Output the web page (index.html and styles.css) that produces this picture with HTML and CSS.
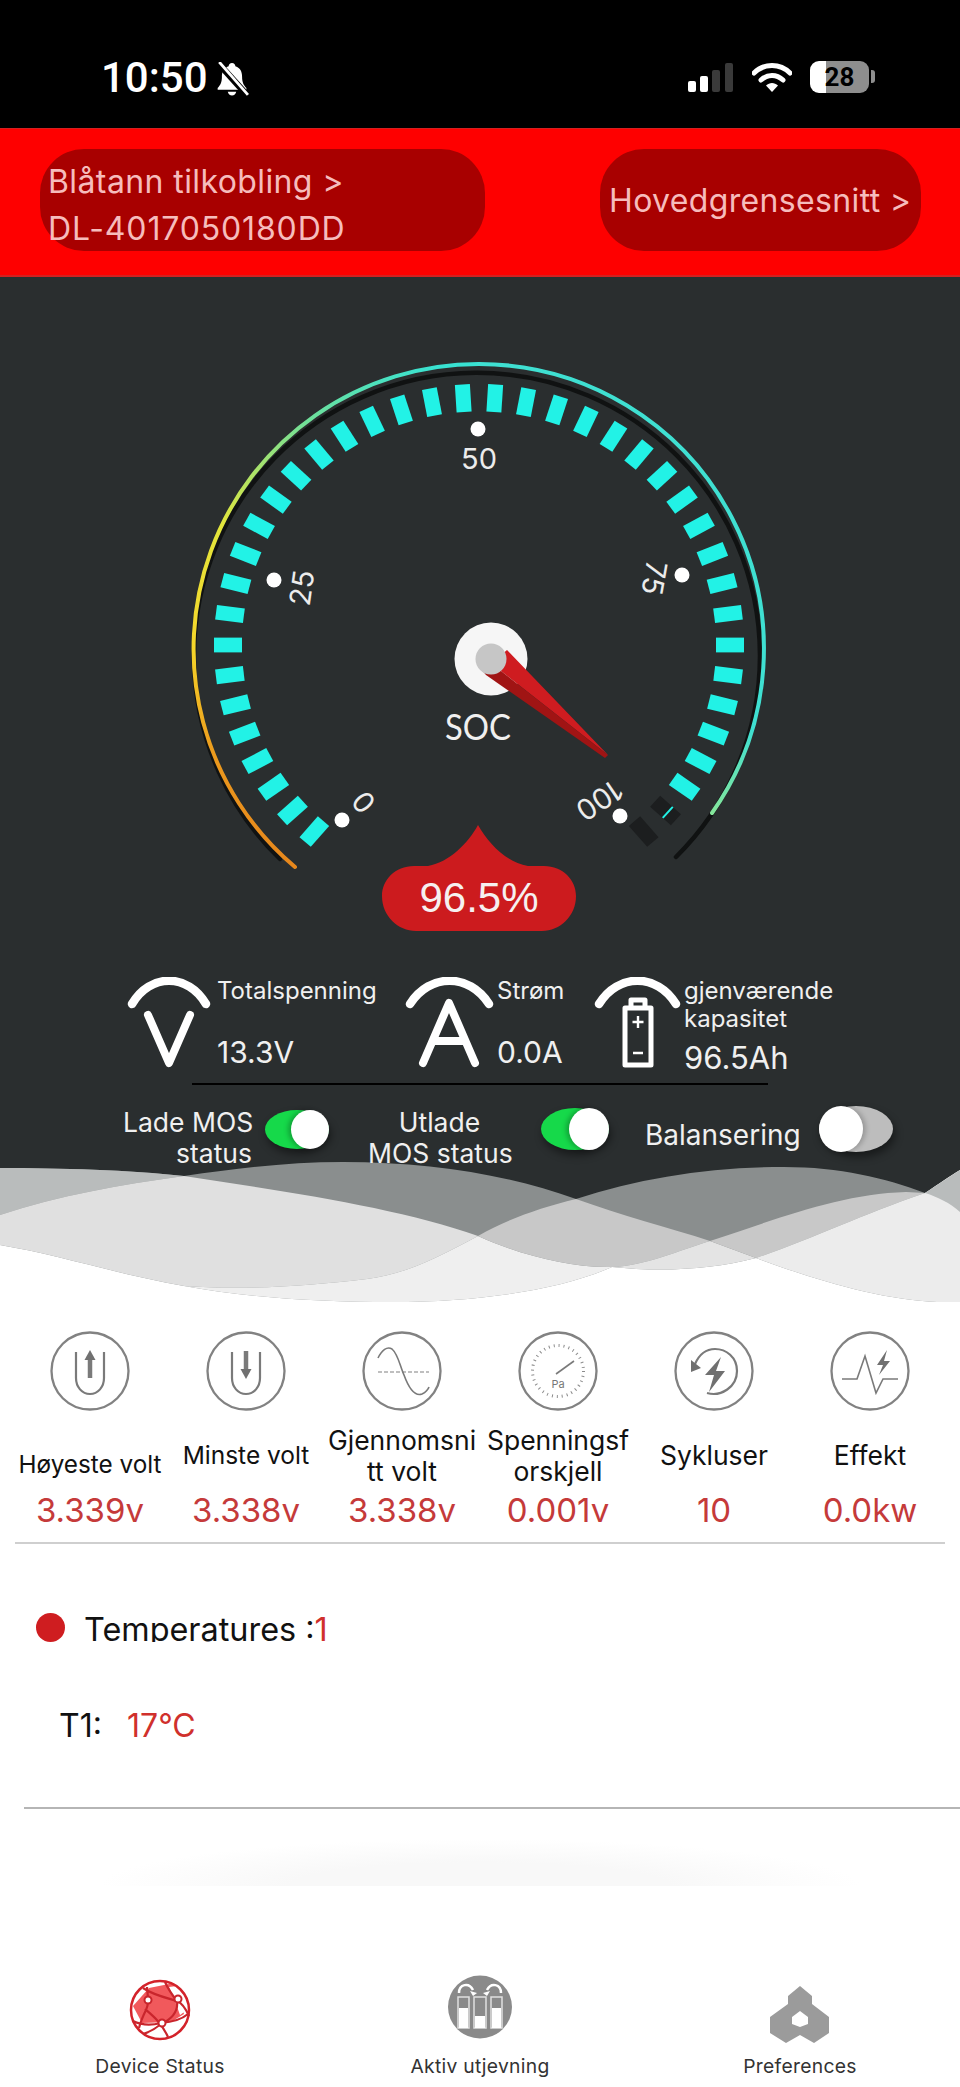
FILE: index.html
```html
<!DOCTYPE html>
<html lang="no">
<head>
<meta charset="utf-8">
<title>Device Status</title>
<link rel="stylesheet" href="styles.css">
</head>
<body>
<div class="page">
  <header class="statusbar">
    <div class="sb-left">
      <span class="time">10:50</span>
      <svg class="bell" viewBox="0 0 32 32" width="34" height="34">
        <path d="M16 1c-2 0-3 1.500-3.200 3C8 5.500 6.500 9.500 6.500 14c0 5-1.500 7.500-4 10.500V26h27v-1.500c-2.500-3-4-5.500-4-10.500 0-4.500-1.500-8.500-6.300-10C19 2.500 18 1 16 1z" fill="#fff"/>
        <path d="M12 28h8c-.5 2-2 3.500-4 3.500S12.500 30 12 28z" fill="#fff"/>
        <path d="M3 1l27 30" stroke="#000" stroke-width="6"/>
        <path d="M4 0l27 31" stroke="#fff" stroke-width="2.600"/>
      </svg>
    </div>
    <div class="sb-right">
      <svg class="signal" viewBox="0 0 46 29" width="46" height="29">
        <rect x="0" y="18" width="8" height="11" rx="2" fill="#fff"/>
        <rect x="12" y="13" width="8" height="16" rx="2" fill="#fff"/>
        <rect x="24" y="7" width="8" height="22" rx="2" fill="#3a3a3a"/>
        <rect x="37" y="0" width="8" height="29" rx="2" fill="#3a3a3a"/>
      </svg>
      <svg class="wifi" viewBox="0 0 40 29" width="40" height="29">
        <path d="M2 10C12 0 28 0 38 10" fill="none" stroke="#fff" stroke-width="5" stroke-linecap="round"/>
        <path d="M9 17c6.500-6 15.500-6 22 0" fill="none" stroke="#fff" stroke-width="5" stroke-linecap="round"/>
        <path d="M14 22.500c3.500-3.500 8.500-3.500 12 0L20 29z" fill="#fff"/>
      </svg>
      <div class="battery"><span>28</span></div>
      <div class="battery-nub"></div>
    </div>
  </header>

  <nav class="topbar">
    <div class="pill pill-left">
      <div class="pill-line-a">Blåtann tilkobling &gt;</div>
      <div class="pill-line-b">DL-4017050180DD</div>
    </div>
    <div class="pill pill-right">Hovedgrensesnitt &gt;</div>
  </nav>

  <section class="hero">
    <svg class="gauge" viewBox="0 277 960 680" width="960" height="680">
      <defs>
        <linearGradient id="arcLeft" gradientUnits="userSpaceOnUse" x1="240" y1="880" x2="420" y2="360">
          <stop offset="0" stop-color="#e5801c"/>
          <stop offset=".2" stop-color="#eb9a1d"/>
          <stop offset=".37" stop-color="#f6d62a"/>
          <stop offset=".6" stop-color="#e2e63c"/>
          <stop offset=".83" stop-color="#6fe09a"/>
          <stop offset="1" stop-color="#38e2d2"/>
        </linearGradient>
        <linearGradient id="arcRight" gradientUnits="userSpaceOnUse" x1="700" y1="730" x2="700" y2="815">
          <stop offset="0" stop-color="#3fe0d2"/>
          <stop offset="1" stop-color="#86e69a"/>
        </linearGradient>
      </defs>
      <path class="arc-track" d="M280 859A283 283 0 1 1 676 857"/>
      <path class="arc-color" stroke="url(#arcLeft)" d="M295 867A285 285 0 0 1 479 364"/>
      <path class="arc-color" stroke="url(#arcRight)" d="M479 364A285 285 0 0 1 712 813"/>
      <g class="ticks" transform="translate(479 645) scale(1 .985)">
        <rect x="-7.500" y="-265" width="15" height="28" transform="rotate(-139)"/>
        <rect x="-7.500" y="-265" width="15" height="28" transform="rotate(-132)"/>
        <rect x="-7.500" y="-265" width="15" height="28" transform="rotate(-125)"/>
        <rect x="-7.500" y="-265" width="15" height="28" transform="rotate(-118)"/>
        <rect x="-7.500" y="-265" width="15" height="28" transform="rotate(-111)"/>
        <rect x="-7.500" y="-265" width="15" height="28" transform="rotate(-104)"/>
        <rect x="-7.500" y="-265" width="15" height="28" transform="rotate(-97)"/>
        <rect x="-7.500" y="-265" width="15" height="28" transform="rotate(-90)"/>
        <rect x="-7.500" y="-265" width="15" height="28" transform="rotate(-82.800)"/>
        <rect x="-7.500" y="-265" width="15" height="28" transform="rotate(-75.600)"/>
        <rect x="-7.500" y="-265" width="15" height="28" transform="rotate(-68.400)"/>
        <rect x="-7.500" y="-265" width="15" height="28" transform="rotate(-61.200)"/>
        <rect x="-7.500" y="-265" width="15" height="28" transform="rotate(-54)"/>
        <rect x="-7.500" y="-265" width="15" height="28" transform="rotate(-46.800)"/>
        <rect x="-7.500" y="-265" width="15" height="28" transform="rotate(-39.600)"/>
        <rect x="-7.500" y="-265" width="15" height="28" transform="rotate(-32.400)"/>
        <rect x="-7.500" y="-265" width="15" height="28" transform="rotate(-25.200)"/>
        <rect x="-7.500" y="-265" width="15" height="28" transform="rotate(-18)"/>
        <rect x="-7.500" y="-265" width="15" height="28" transform="rotate(-10.800)"/>
        <rect x="-7.500" y="-265" width="15" height="28" transform="rotate(-3.600)"/>
        <rect x="-7.500" y="-265" width="15" height="28" transform="rotate(3.600)"/>
        <rect x="-7.500" y="-265" width="15" height="28" transform="rotate(10.800)"/>
        <rect x="-7.500" y="-265" width="15" height="28" transform="rotate(18)"/>
        <rect x="-7.500" y="-265" width="15" height="28" transform="rotate(25.200)"/>
        <rect x="-7.500" y="-265" width="15" height="28" transform="rotate(32.400)"/>
        <rect x="-7.500" y="-265" width="15" height="28" transform="rotate(39.600)"/>
        <rect x="-7.500" y="-265" width="15" height="28" transform="rotate(46.800)"/>
        <rect x="-7.500" y="-265" width="15" height="28" transform="rotate(54)"/>
        <rect x="-7.500" y="-265" width="15" height="28" transform="rotate(61.200)"/>
        <rect x="-7.500" y="-265" width="15" height="28" transform="rotate(68.400)"/>
        <rect x="-7.500" y="-265" width="15" height="28" transform="rotate(75.600)"/>
        <rect x="-7.500" y="-265" width="15" height="28" transform="rotate(82.800)"/>
        <rect x="-7.500" y="-265" width="15" height="28" transform="rotate(90)"/>
        <rect x="-7.500" y="-265" width="15" height="28" transform="rotate(97)"/>
        <rect x="-7.500" y="-265" width="15" height="28" transform="rotate(104)"/>
        <rect x="-7.500" y="-265" width="15" height="28" transform="rotate(111)"/>
        <rect x="-7.500" y="-265" width="15" height="28" transform="rotate(118)"/>
        <rect x="-7.500" y="-265" width="15" height="28" transform="rotate(125)"/>
        <rect class="tick-off" x="-7.500" y="-265" width="15" height="28" transform="rotate(132)"/>
        <rect x="-7.500" y="-255" width="15" height="2" transform="rotate(132)"/>
        <rect class="tick-off" x="-7.500" y="-265" width="15" height="28" transform="rotate(139)"/>
      </g>
      <g class="dots">
        <circle cx="342" cy="820" r="7.500"/>
        <circle cx="274" cy="580" r="7.500"/>
        <circle cx="478" cy="429" r="7.500"/>
        <circle cx="682" cy="575" r="7.500"/>
        <circle cx="620" cy="816" r="7.500"/>
      </g>
      <g class="scale">
        <text transform="translate(364 802) rotate(-130)" y="10">0</text>
        <text transform="translate(302 588) rotate(-82)" y="10">25</text>
        <text x="479" y="469">50</text>
        <text transform="translate(654 578) rotate(100)" y="10">75</text>
        <text transform="translate(599 800) rotate(146)" y="10">100</text>
      </g>
      <circle class="hub" cx="491" cy="659" r="36.500"/>
      <polygon class="needle-top" points="507,650 608,755 501,671 490,665"/>
      <polygon class="needle-low" points="501,671 608,755 605,758 486,675 480,668"/>
      <circle class="hub-cap" cx="491" cy="659" r="15.500"/>
      <text class="soc" x="478" y="740" textLength="66" lengthAdjust="spacingAndGlyphs">SOC</text>
      <path class="drop" d="M478 825C468 843 450 862 428 866L414 866C395 866 382 880 382 896C382 916 398 931 416 931H542C560 931 576 916 576 896C576 880 563 866 544 866L528 866C506 862 488 843 478 825Z"/>
      <text class="soc-value" x="479" y="912">96.5%</text>
    </svg>

    <div class="stats">
      <div class="stat stat-v">
        <svg class="stat-icon" viewBox="0 0 84 92" width="84" height="92">
          <path class="sym-arc" d="M5 27C23 -4 61 -4 79 27"/>
          <path class="sym" d="M21 38L42 86L63 38"/>
        </svg>
        <div class="stat-text">
          <div class="stat-label">Totalspenning</div>
          <div class="stat-value">13.3V</div>
        </div>
      </div>
      <div class="stat stat-a">
        <svg class="stat-icon" viewBox="0 0 89 92" width="89" height="92">
          <path class="sym-arc" d="M5 27C25 -4 64 -4 84 27"/>
          <path class="sym" d="M18 86L44 26L70 86M28 64H60"/>
        </svg>
        <div class="stat-text">
          <div class="stat-label">Strøm</div>
          <div class="stat-value">0.0A</div>
        </div>
      </div>
      <div class="stat stat-c">
        <svg class="stat-icon" viewBox="0 0 87 92" width="87" height="92">
          <path class="sym-arc" d="M5 27C24 -4 63 -4 82 27"/>
          <path class="batt-line" d="M37 29V23H51V29M31 31H57V88H31Z"/>
          <path class="batt-thin" d="M44 39V51M38.500 45H49.500M39 76H49"/>
        </svg>
        <div class="stat-text">
          <div class="stat-label">gjenværende<br>kapasitet</div>
          <div class="stat-value">96.5Ah</div>
        </div>
      </div>
    </div>
    <div class="rule"></div>

    <div class="switches">
      <div class="sw-label sw-label-a">Lade MOS<br>status</div>
      <div class="toggle toggle-a on"><i></i></div>
      <div class="sw-label sw-label-b">Utlade<br>MOS status</div>
      <div class="toggle toggle-b on"><i></i></div>
      <div class="sw-label sw-label-c">Balansering</div>
      <div class="toggle toggle-c"><i></i></div>
    </div>

    <svg class="waves" viewBox="0 1160 960 150" width="960" height="150">
      <path fill="#8a8e8e" d="M0 1168C60 1168 130 1170 184 1176C240 1168 290 1162 343 1162C430 1162 510 1175 576 1199C640 1178 710 1167 784 1167C840 1167 885 1178 925 1193C940 1183 950 1176 960 1170V1310H0Z"/>
      <path fill="#fff" d="M0 1245C60 1255 120 1275 184 1286C250 1298 320 1302 392 1302C480 1302 560 1290 612 1267C660 1272 710 1270 756 1258C810 1278 880 1300 937 1302H960V1310H0Z"/>
      <path fill="#b9bcbc" d="M0 1168C60 1168 130 1170 184 1176C120 1185 60 1195 0 1215Z"/>
      <path fill="#e0e0e0" d="M0 1215C60 1195 120 1185 184 1176C290 1192 400 1208 478 1236C430 1262 400 1275 367 1279C300 1287 240 1290 184 1286C120 1275 60 1255 0 1245Z"/>
      <path fill="#efefef" d="M184 1286C240 1290 300 1287 367 1279C400 1275 430 1262 478 1236C520 1255 570 1268 612 1267C560 1290 480 1302 392 1302C320 1302 250 1298 184 1286Z"/>
      <path fill="#c8c8c8" d="M478 1236C510 1218 540 1208 576 1199C620 1215 670 1228 710 1241C680 1250 645 1266 612 1267C570 1268 520 1255 478 1236Z"/>
      <path fill="#e4e4e4" d="M612 1267C645 1266 680 1250 710 1241L756 1258C710 1270 660 1272 612 1267Z"/>
      <path fill="#c8c8c8" d="M710 1241C780 1218 840 1194 906 1192L925 1193C860 1215 810 1240 756 1258Z"/>
      <path fill="#ececec" d="M756 1258C810 1240 860 1215 925 1193C940 1183 950 1176 960 1170V1302H937C880 1300 810 1278 756 1258Z"/>
      <path fill="#b9bcbc" d="M925 1193L960 1170V1212C950 1203 938 1197 925 1193Z"/>
    </svg>
  </section>

  <section class="metrics">
    <div class="metric">
      <svg class="metric-icon" viewBox="0 0 80 80" width="80" height="80">
        <circle class="ring" cx="40" cy="40" r="38.500"/>
        <path class="line" d="M26 21V47C26 56 32 63 40 63S54 56 54 47V21"/>
        <path class="stem" d="M40 47V26"/>
        <path class="head" d="M40 19L45.500 29H34.500Z"/>
      </svg>
      <div class="metric-label metric-label-low">Høyeste volt</div>
      <div class="metric-value">3.339v</div>
    </div>
    <div class="metric">
      <svg class="metric-icon" viewBox="0 0 80 80" width="80" height="80">
        <circle class="ring" cx="40" cy="40" r="38.500"/>
        <path class="line" d="M26 21V47C26 56 32 63 40 63S54 56 54 47V21"/>
        <path class="stem" d="M40 20V41"/>
        <path class="head" d="M40 48L45.500 38H34.500Z"/>
      </svg>
      <div class="metric-label metric-label-small">Minste volt</div>
      <div class="metric-value">3.338v</div>
    </div>
    <div class="metric">
      <svg class="metric-icon" viewBox="0 0 80 80" width="80" height="80">
        <circle class="ring" cx="40" cy="40" r="38.500"/>
        <path class="dash" d="M16 41H67"/>
        <path class="line-thin" d="M16 27C20 19 25 15 30 18C36 23 38 35 42 44C46 55 52 66 60 63C64 61 66 59 67 56"/>
      </svg>
      <div class="metric-label">Gjennomsni<br>tt volt</div>
      <div class="metric-value">3.338v</div>
    </div>
    <div class="metric">
      <svg class="metric-icon" viewBox="0 0 80 80" width="80" height="80">
        <circle class="ring" cx="40" cy="40" r="38.500"/>
        <circle class="dial" cx="40" cy="40" r="25.500"/>
        <path class="line-thin" d="M38 43L56 30"/>
        <text class="pa" x="40" y="57">Pa</text>
      </svg>
      <div class="metric-label">Spenningsf<br>orskjell</div>
      <div class="metric-value">0.001v</div>
    </div>
    <div class="metric">
      <svg class="metric-icon" viewBox="0 0 80 80" width="80" height="80">
        <circle class="ring" cx="40" cy="40" r="38.500"/>
        <path class="line" d="M33 62C47 66 63 56 63 40C63 26 52 18 41 18C32 18 25 24 21 33"/>
        <path class="bolt" d="M17 29L27 37L17 41Z"/>
        <path class="bolt" d="M47 26L31 44H40L35 61L51 40H42Z"/>
      </svg>
      <div class="metric-label">Sykluser</div>
      <div class="metric-value">10</div>
    </div>
    <div class="metric">
      <svg class="metric-icon" viewBox="0 0 80 80" width="80" height="80">
        <circle class="ring" cx="40" cy="40" r="38.500"/>
        <path class="line-thin" d="M12 48H27L35 25L46 62L53 48H68"/>
        <path class="bolt" d="M57 19L47 34H53L49 44L60 30H54Z"/>
      </svg>
      <div class="metric-label">Effekt</div>
      <div class="metric-value">0.0kw</div>
    </div>
  </section>
  <div class="metrics-rule"></div>

  <section class="temps">
    <div class="temp-head">
      <span class="temp-dot"></span>
      <div class="temp-title">Temperatures :<span class="red">1</span></div>
    </div>
    <div class="temp-row"><span class="temp-name">T1:</span><span class="red">17°C</span></div>
    <div class="temp-rule"></div>
    <div class="smear"></div>
  </section>

  <footer class="tabbar">
    <div class="tab">
      <svg class="tab-icon tab-icon-globe" viewBox="0 0 70 70" width="70" height="70">
        <path fill="#f1595c" d="M24 14L49 9L59 40L46 48L17 49L8 32Z"/>
        <path d="M44 13L60 11L62 36L55 41L49 24Z" fill="#fff"/>
        <circle cx="35" cy="36" r="29" fill="none" stroke="#d3222a" stroke-width="2.500"/>
        <path fill="none" stroke="#c9252c" stroke-width="2.200" d="M8 47C20 53 32 50 36 49C48 48 56 46 63 40M22 13C23 24 24 30 21 36C19 40 16 46 14 54M20 35C28 42 36 48 43 63M40 8C44 17 48 22 52 27C53 35 49 44 36 50M36 50C30 55 25 58 18 60M18 14C28 21 42 24 52 27M52 27C57 29 60 33 64 42"/>
        <g fill="#fff" stroke="#c9252c" stroke-width="2"><circle cx="23" cy="26" r="3.500"/><circle cx="53" cy="25" r="3.500"/><circle cx="37" cy="49" r="3.500"/></g>
      </svg>
      <div class="tab-label">Device Status</div>
    </div>
    <div class="tab">
      <svg class="tab-icon" viewBox="0 0 70 70" width="70" height="70">
        <ellipse cx="35" cy="33" rx="32" ry="31.500" fill="#8a8a8a"/>
        <path fill="none" stroke="#fff" stroke-width="2.500" d="M14 19C14 10 24 8 28 16M56 19C56 10 46 8 42 16"/>
        <path fill="#fff" d="M25 17L32 19L28 22ZM45 17L38 19L42 22Z"/>
        <g fill="none" stroke="#e0e0e0" stroke-width="1.500"><rect x="13" y="23" width="11" height="31"/><rect x="29" y="23" width="12" height="31"/><rect x="46" y="23" width="11" height="31"/></g>
        <g fill="#fff"><rect x="14" y="34" width="9" height="20"/><rect x="30" y="42" width="10" height="12"/><rect x="47" y="34" width="9" height="20"/></g>
      </svg>
      <div class="tab-label">Aktiv utjevning</div>
    </div>
    <div class="tab">
      <svg class="tab-icon tab-icon-hex" viewBox="0 0 70 70" width="70" height="70">
        <path fill="#9b9b9b" fill-rule="evenodd" d="M35 12L47 22V30L64 43V59L49 69L35 61L21 69L5 59V43L23 30V22ZM35 37L27 43V50L35 53L43 50V43Z"/>
      </svg>
      <div class="tab-label">Preferences</div>
    </div>
  </footer>
</div>
</body>
</html>
```

FILE: styles.css
```css
* { box-sizing: border-box; }
html, body { margin: 0; padding: 0; background: #fff; }
body { font-family: Inter, "Liberation Sans", sans-serif; color: #111; }
.page { width: 960px; height: 2087px; overflow: hidden; }

/* status bar */
.statusbar { height: 128px; background: #000; display: flex; justify-content: space-between; padding-top: 61px; color: #fff; }
.sb-left { display: flex; align-items: flex-start; padding-left: 101px; gap: 7px; }
.time { font-family: Roboto, sans-serif; font-weight: 500; font-size: 42px; line-height: 34px; }
.bell { margin-top: 1px; }
.sb-right { display: flex; align-items: flex-start; padding-right: 85px; }
.signal { margin-top: 2px; }
.wifi { margin: 2px 0 0 18px; }
.battery { width: 59px; height: 32px; margin-left: 18px; border-radius: 9px; background: linear-gradient(90deg, #fff 0 16px, #8e8e8e 16px); color: #000; text-align: center; font: 700 26px/33px Roboto, sans-serif; }
.battery-nub { width: 4px; height: 13px; margin: 9px 0 0 2px; border-radius: 0 3px 3px 0; background: #8e8e8e; }

/* top bar */
.topbar { height: 149px; background: #fe0000; border-top: 1px solid #d42020; border-bottom: 2px solid #d42020; display: flex; justify-content: space-between; padding: 20px 39px 0 40px; }
.pill { height: 102px; border-radius: 44px; background: #a80000; color: #f6bcbc; font-size: 32px; white-space: nowrap; }
.pill-left { width: 445px; padding: 9px 0 0 8px; line-height: 47px; }
.pill-line-a { letter-spacing: .4px; }
.pill-line-b { letter-spacing: .85px; }
.pill-right { width: 321px; line-height: 104px; padding-left: 9px; letter-spacing: .35px; }

/* hero */
.hero { position: relative; height: 1033px; background: #2a2e2f; }
.gauge { display: block; position: relative; z-index: 1; }
.arc-track { fill: none; stroke: #101212; stroke-width: 4.500; stroke-linecap: round; }
.arc-color { fill: none; stroke-width: 4; stroke-linecap: round; }
.ticks { fill: #22f2e6; }
.ticks .tick-off { fill: #1c1e1f; }
.dots { fill: #fff; }
.scale { fill: #ececec; font-size: 29px; text-anchor: middle; }
.hub { fill: #f6f6f6; }
.hub-cap { fill: #c6c6c6; }
.needle-top { fill: #cf1c20; }
.needle-low { fill: #a01414; }
.soc { fill: #f0f0f0; font-family: Lato, sans-serif; font-size: 37px; text-anchor: middle; }
.drop { fill: #cc1b1e; }
.soc-value { fill: #f6f0f0; font-family: "Liberation Sans", sans-serif; font-size: 42px; text-anchor: middle; }

.stats { position: relative; z-index: 1; display: grid; grid-template-columns: 278px 189px 1fr; margin-top: 20px; padding-left: 127px; color: #f0f0f0; }
.stat { display: flex; }
.stat-icon { flex: none; display: block; }
.stat-text { height: 98px; display: flex; flex-direction: column; justify-content: space-between; padding-left: 3px; white-space: nowrap; }
.stat-v .stat-text { padding-left: 6px; }
.stat-label { font-size: 24px; line-height: 28px; }
.stat-value { font-size: 30px; line-height: 32px; padding-bottom: 7px; }
.stat-c .stat-value { font-size: 31px; padding-bottom: 1px; }
.sym-arc { fill: none; stroke: #fff; stroke-width: 8.500; stroke-linecap: round; }
.sym { fill: none; stroke: #fff; stroke-width: 8; stroke-linecap: round; stroke-linejoin: round; }
.batt-line { fill: none; stroke: #fff; stroke-width: 5; stroke-linejoin: round; }
.batt-thin { fill: none; stroke: #fff; stroke-width: 2.400; }

.rule { position: relative; z-index: 1; width: 576px; height: 2px; margin: 8px 0 0 192px; background: #000; }

.switches { position: relative; z-index: 2; display: flex; align-items: flex-start; margin-top: 20px; padding-left: 123px; color: #f0f0f0; font-size: 26.500px; line-height: 31px; white-space: nowrap; }
.sw-label-a { width: 129px; margin-top: 2px; text-align: right; }
.sw-label-b { width: 143px; margin: 2px 0 0 39px; text-align: center; }
.sw-label-c { width: 155px; margin: 15px 0 0 36px; font-size: 28px; }
.toggle { position: relative; border-radius: 50% / 50%; background: #bdbdbd; box-shadow: 2px 5px 8px rgba(0,0,0,.45); }
.toggle.on { background: #16d94a; }
.toggle i { position: absolute; top: 0; bottom: 0; background: #fff; border-radius: 50%; }
.toggle.on i { right: 0; box-shadow: -3px 0 5px rgba(0,0,0,.25); }
.toggle-a { width: 64px; height: 39px; margin: 5px 0 0 13px; }
.toggle-a i { width: 38px; }
.toggle-b { width: 68px; height: 42px; margin: 3px 0 0 30px; }
.toggle-b i { width: 40px; }
.toggle-c { width: 74px; height: 46px; margin: 1px 0 0 19px; }
.toggle-c i { left: 0; width: 44px; box-shadow: 3px 0 5px rgba(0,0,0,.2); }

.waves { position: absolute; left: 0; bottom: 0; display: block; }

/* metrics */
.metrics { display: grid; grid-template-columns: repeat(6, 156px); margin-left: 12px; height: 232px; text-align: center; }
.metric { display: flex; flex-direction: column; align-items: center; }
.metric-icon { display: block; margin-top: 21px; }
.metric-label { height: 63px; margin-top: 13px; display: flex; align-items: center; justify-content: center; font-size: 26.500px; line-height: 31px; color: #111; white-space: nowrap; }
.metric-label-low { font-size: 24.300px; padding-top: 18px; }
.metric-label-small { font-size: 24.500px; }
.metric-value { margin-top: 3px; font-size: 33px; line-height: 40px; color: #c53a3a; white-space: nowrap; }
.ring { fill: none; stroke: #828282; stroke-width: 2.300; }
.line { fill: none; stroke: #7a7a7a; stroke-width: 2.200; }
.line-thin { fill: none; stroke: #7a7a7a; stroke-width: 1.600; }
.stem { fill: none; stroke: #7a7a7a; stroke-width: 4.500; }
.head, .bolt { fill: #707070; }
.dash { fill: none; stroke: #aaa; stroke-width: 1.600; stroke-dasharray: 4 2; }
.dial { fill: none; stroke: #8c8c8c; stroke-width: 3; stroke-dasharray: 1 4; }
.pa { fill: #777; font-size: 11px; text-anchor: middle; }
.metrics-rule { width: 930px; height: 2px; margin-left: 15px; background: #cfcfcf; }

/* temperatures */
.temps { padding-top: 66px; font-size: 32px; line-height: 40px; }
.temp-head { display: flex; align-items: flex-start; padding-left: 36px; gap: 19px; height: 32px; overflow: hidden; }
.temp-dot { flex: none; width: 29px; height: 29px; margin-top: 3px; border-radius: 50%; background: #cf1d20; }
.temp-title { color: #111; font-size: 32.400px; line-height: 40px; }
.red { color: #d0302c; }
.temp-row { display: flex; margin-top: 64px; padding-left: 59px; }
.temp-name { width: 68px; color: #111; }
.temp-rule { height: 2px; margin: 61px 0 0 24px; background: #b5b5b5; }
.smear { width: 760px; height: 47px; margin: 30px 0 0 100px; background: radial-gradient(ellipse 50% 100% at 50% 100%, #f8f8f8 50%, rgba(255,255,255,0)); }

/* tabs */
.tabbar { display: grid; grid-template-columns: repeat(3, 320px); margin-top: 88px; text-align: center; }
.tab { display: flex; flex-direction: column; align-items: center; }
.tab-icon { display: block; }
.tab-label { margin-top: 10px; font-size: 19.300px; line-height: 24px; color: #333; letter-spacing: .3px; }
```
